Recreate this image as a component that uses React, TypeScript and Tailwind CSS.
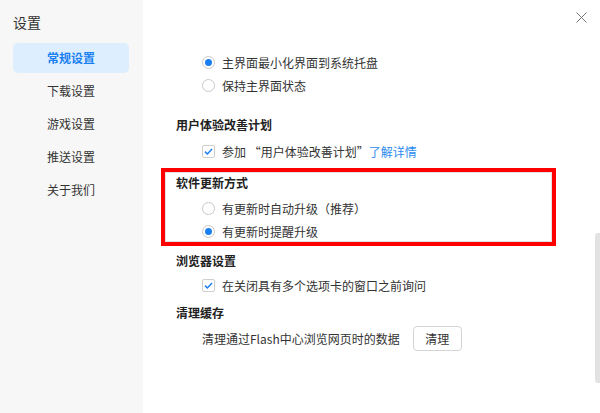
import React from "react";

const font = { fontFamily: '"Noto Sans CJK SC", "Noto Sans", sans-serif' };

function Radio({ checked, label }: { checked?: boolean; label: string }) {
  return (
    <div className="flex h-[23px] items-center pl-[26px]">
      <span className="flex h-[13px] w-[13px] items-center justify-center rounded-full border border-[#c9c9c9] bg-white">
        {checked && <span className="h-[7px] w-[7px] rounded-full bg-[#1a7ff0]" />}
      </span>
      <span className="ml-[7px] text-[12px] text-[#333]">{label}</span>
    </div>
  );
}

function Check({ children }: { children: React.ReactNode }) {
  return (
    <div className="flex h-[23px] items-center pl-[26px]">
      <span className="flex h-[13px] w-[13px] items-center justify-center rounded-[2px] border border-[#cfcfcf] bg-white">
        <svg width="11" height="11" viewBox="0 0 11 11">
          <path d="M2 5.6 L4.4 8 L9 3" fill="none" stroke="#1a7ff0" strokeWidth="1.5" />
        </svg>
      </span>
      <span className="ml-[7px] text-[12px] text-[#333]">{children}</span>
    </div>
  );
}

function Heading({ children, h = "h-[23px]" }: { children: React.ReactNode; h?: string }) {
  return <div className={`flex items-center text-[12px] font-bold text-[#222] ${h}`}>{children}</div>;
}

export default function App() {
  const items = ["常规设置", "下载设置", "游戏设置", "推送设置", "关于我们"];
  return (
    <div className="relative flex h-[413px] w-[600px] overflow-hidden bg-white" style={font}>
      <div className="flex w-[143px] flex-col bg-[#f7f7f7] pl-[13px] pt-[12px]">
        <div className="flex h-[21px] items-center text-[14px] text-[#333]">设置</div>
        <div className="mt-[10px] flex flex-col gap-[3px]">
          {items.map((t, i) => (
            <div
              key={t}
              className={
                i === 0
                  ? "flex h-[30px] w-[116px] items-center justify-center rounded-[5px] bg-[#ddeeff] text-[12px] font-bold text-[#1a7ff0]"
                  : "flex h-[30px] w-[116px] items-center justify-center text-[12px] text-[#333]"
              }
            >
              {t}
            </div>
          ))}
        </div>
      </div>

      <div className="flex flex-1 flex-col pl-[33px] pt-[51px]">
        <Radio checked label="主界面最小化界面到系统托盘" />
        <Radio label="保持主界面状态" />
        <div className="mt-[16px]">
          <Heading>用户体验改善计划</Heading>
        </div>
        <div className="mt-[4px]">
          <Check>
            参加 “用户体验改善计划”<span className="text-[#2b8af0]">了解详情</span>
          </Check>
        </div>
        <div className="ml-[-15px] mt-[5px] h-[78px] w-[395px] border-4 border-[#ff0000] pl-[11px] shadow-[inset_0_0_0_1px_#e3e3e3]">
          <Heading h="h-[22px]">软件更新方式</Heading>
          <div className="mt-[3px]">
            <Radio label="有更新时自动升级（推荐）" />
            <Radio checked label="有更新时提醒升级" />
          </div>
        </div>
        <div className="mt-[3px]">
          <Heading>浏览器设置</Heading>
        </div>
        <div className="mt-[2px]">
          <Check>在关闭具有多个选项卡的窗口之前询问</Check>
        </div>
        <div className="mt-[4px]">
          <Heading>清理缓存</Heading>
        </div>
        <div className="mt-[2px] flex h-[25px] items-center pl-[26px]">
          <span className="text-[12px] text-[#333]">清理通过Flash中心浏览网页时的数据</span>
          <button className="ml-[13px] flex h-[25px] w-[49px] items-center justify-center rounded-[4px] border border-[#d4d4d4] bg-white text-[12px] text-[#333]">
            清理
          </button>
        </div>
      </div>

      <div className="absolute right-[13px] top-[12px]">
        <svg width="11" height="11" viewBox="0 0 11 11">
          <path d="M0.5 0.5 L10.5 10.5 M10.5 0.5 L0.5 10.5" stroke="#777" strokeWidth="1" fill="none" />
        </svg>
      </div>
      <div className="absolute right-0 top-[233px] h-[150px] w-[5px] rounded-l-[3px] bg-[#e2e2e2]" />
    </div>
  );
}
